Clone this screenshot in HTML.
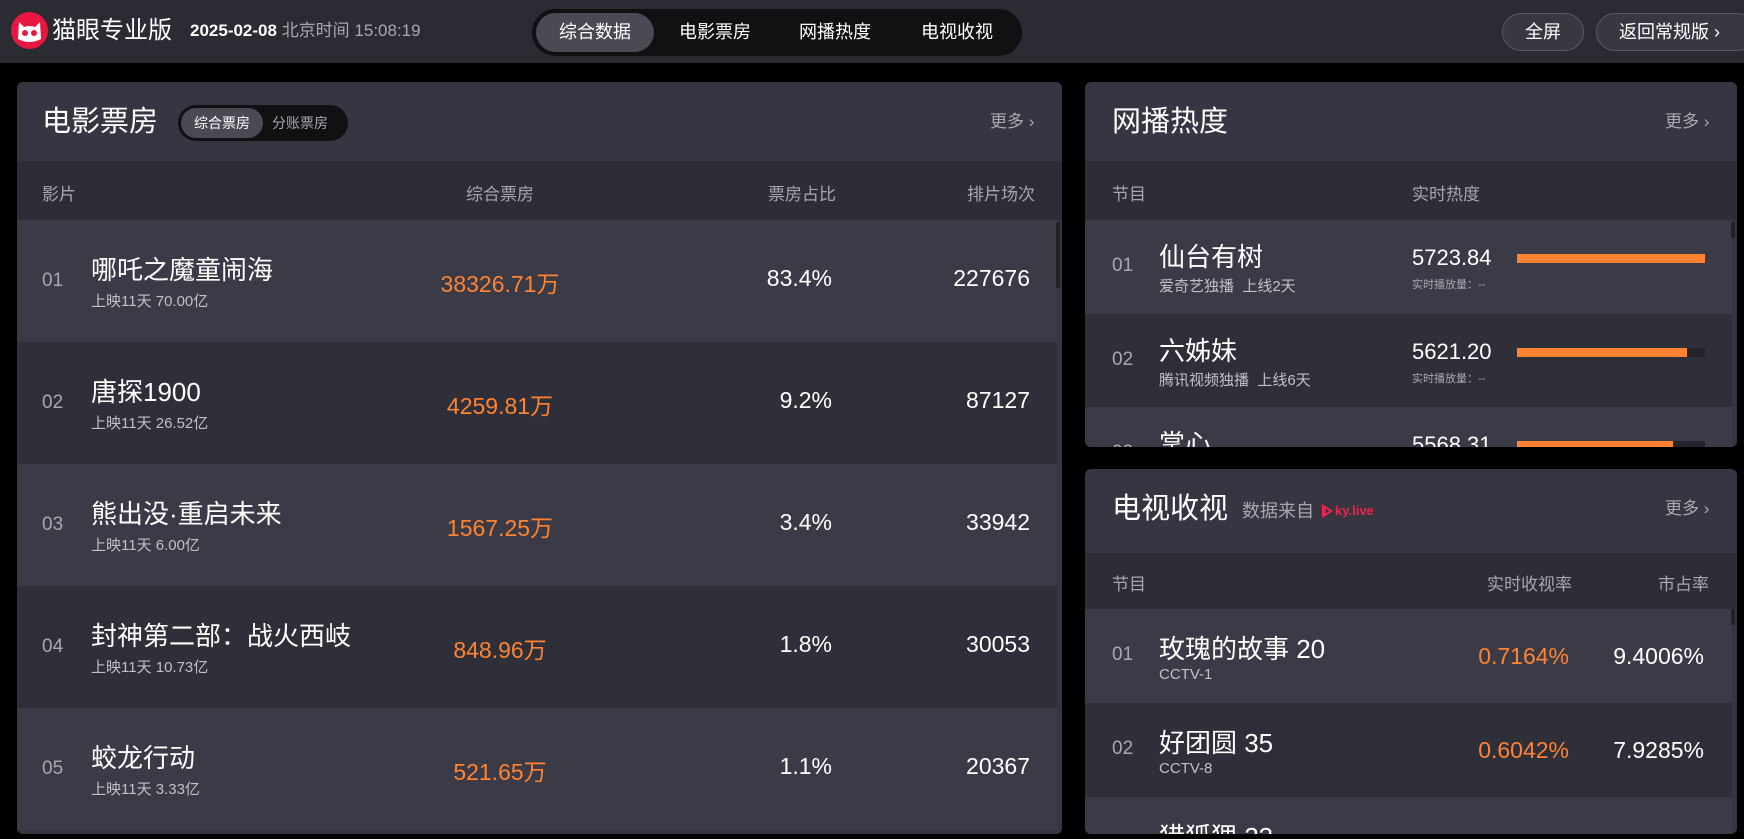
<!DOCTYPE html>
<html><head><meta charset="utf-8"><style>
*{margin:0;padding:0;box-sizing:border-box}
html,body{width:1744px;height:839px;overflow:hidden}
body{background:#000;font-family:"Liberation Sans","Noto Sans CJK SC",sans-serif;color:#fff;position:relative}
.a{position:absolute;white-space:nowrap}
.hdr{left:0;top:0;width:1744px;height:63px;background:#2b2b34}
.panel{background:#363642;border-radius:6px;overflow:hidden}
.th{background:#2d2d37;color:#a6a6ae;font-size:17px}
.r1{background:#3b3b47}.r2{background:#2f2f39}
.gray{color:#a8a8b0}.org{color:#ff8330}
.more{color:#a9a9b1;font-size:17px}
.btn{border:1px solid #5a5a64;background:#383842;border-radius:20px;height:38px;top:13px;font-size:18px;line-height:36px;text-align:center}
.bar{height:9px;background:#24242c}.bar i{display:block;height:9px;background:#ff8330}
</style></head><body>
<div class="a hdr"></div>
<svg class="a" style="left:11px;top:12px" width="37" height="37" viewBox="0 0 37 37"><circle cx="18.5" cy="18.5" r="18.5" fill="#e8173f"/><path d="M7 27 L8 10 L13 15 Q18.5 13 24 15 L29 10 L30 27 Q18.5 33 7 27Z" fill="#fff"/><circle cx="14" cy="21" r="3" fill="#e8173f"/><circle cx="23" cy="21" r="3" fill="#e8173f"/></svg>
<div class="a" style="left:52px;top:16px;font-size:24px;line-height:30px">猫眼专业版</div>
<div class="a" style="left:190px;top:20px;font-size:17px;line-height:22px;font-weight:bold">2025-02-08 <span style="color:#a8a8b0;font-weight:normal">北京时间 15:08:19</span></div>
<div class="a" style="left:532px;top:9px;width:490px;height:47px;background:#111114;border-radius:24px"></div>
<div class="a" style="left:536px;top:13px;width:118px;height:39px;background:#4a4a55;border-radius:20px"></div>
<div class="a" style="left:535px;top:20px;width:120px;text-align:center;font-size:18px;line-height:24px">综合数据</div>
<div class="a" style="left:655px;top:20px;width:120px;text-align:center;font-size:18px;line-height:24px">电影票房</div>
<div class="a" style="left:775px;top:20px;width:120px;text-align:center;font-size:18px;line-height:24px">网播热度</div>
<div class="a" style="left:897px;top:20px;width:120px;text-align:center;font-size:18px;line-height:24px">电视收视</div>
<div class="a btn" style="left:1502px;width:82px">全屏</div>
<div class="a btn" style="left:1596px;width:160px;text-align:left;padding-left:22px">返回常规版 ›</div>

<div class="a panel" style="left:17px;top:82px;width:1045px;height:752px">
<div class="a" style="left:25px;top:22px;font-size:29px;line-height:36px">电影票房</div>
<div class="a" style="left:161px;top:23px;width:170px;height:36px;background:#111114;border-radius:18px"></div>
<div class="a" style="left:164px;top:26px;width:82px;height:30px;background:#4a4a55;border-radius:15px;font-size:14px;line-height:30px;text-align:center">综合票房</div>
<div class="a gray" style="left:255px;top:26px;font-size:14px;line-height:30px">分账票房</div>
<div class="a more" style="left:973px;top:28px;line-height:24px">更多 ›</div>
<div class="a th" style="left:0;top:79px;width:1045px;height:59px"></div>
<div class="a th" style="left:25px;top:98px;background:none">影片</div>
<div class="a th" style="left:433px;top:98px;width:100px;text-align:center;background:none">综合票房</div>
<div class="a th" style="left:719px;top:98px;width:100px;text-align:right;background:none">票房占比</div>
<div class="a th" style="left:918px;top:98px;width:100px;text-align:right;background:none">排片场次</div>
<div class="a" style="left:0;top:138px;width:1040px">
<div style="position:relative;height:122px" class="r1"><div class="a gray" style="left:25px;top:50px;font-size:19px">01</div><div class="a" style="left:74px;top:30px;font-size:26px">哪吒之魔童闹海</div><div class="a" style="left:74px;top:70px;font-size:15px;color:#c0c0c6">上映11天 70.00亿</div><div class="a org" style="left:383px;top:45px;width:200px;text-align:center;font-size:23px">38326.71万</div><div class="a" style="left:615px;top:45px;width:200px;text-align:right;font-size:23px">83.4%</div><div class="a" style="left:813px;top:45px;width:200px;text-align:right;font-size:23px">227676</div></div>
<div style="position:relative;height:122px" class="r2"><div class="a gray" style="left:25px;top:50px;font-size:19px">02</div><div class="a" style="left:74px;top:30px;font-size:26px">唐探1900</div><div class="a" style="left:74px;top:70px;font-size:15px;color:#c0c0c6">上映11天 26.52亿</div><div class="a org" style="left:383px;top:45px;width:200px;text-align:center;font-size:23px">4259.81万</div><div class="a" style="left:615px;top:45px;width:200px;text-align:right;font-size:23px">9.2%</div><div class="a" style="left:813px;top:45px;width:200px;text-align:right;font-size:23px">87127</div></div>
<div style="position:relative;height:122px" class="r1"><div class="a gray" style="left:25px;top:50px;font-size:19px">03</div><div class="a" style="left:74px;top:30px;font-size:26px">熊出没·重启未来</div><div class="a" style="left:74px;top:70px;font-size:15px;color:#c0c0c6">上映11天 6.00亿</div><div class="a org" style="left:383px;top:45px;width:200px;text-align:center;font-size:23px">1567.25万</div><div class="a" style="left:615px;top:45px;width:200px;text-align:right;font-size:23px">3.4%</div><div class="a" style="left:813px;top:45px;width:200px;text-align:right;font-size:23px">33942</div></div>
<div style="position:relative;height:122px" class="r2"><div class="a gray" style="left:25px;top:50px;font-size:19px">04</div><div class="a" style="left:74px;top:30px;font-size:26px">封神第二部：战火西岐</div><div class="a" style="left:74px;top:70px;font-size:15px;color:#c0c0c6">上映11天 10.73亿</div><div class="a org" style="left:383px;top:45px;width:200px;text-align:center;font-size:23px">848.96万</div><div class="a" style="left:615px;top:45px;width:200px;text-align:right;font-size:23px">1.8%</div><div class="a" style="left:813px;top:45px;width:200px;text-align:right;font-size:23px">30053</div></div>
<div style="position:relative;height:122px" class="r1"><div class="a gray" style="left:25px;top:50px;font-size:19px">05</div><div class="a" style="left:74px;top:30px;font-size:26px">蛟龙行动</div><div class="a" style="left:74px;top:70px;font-size:15px;color:#c0c0c6">上映11天 3.33亿</div><div class="a org" style="left:383px;top:45px;width:200px;text-align:center;font-size:23px">521.65万</div><div class="a" style="left:615px;top:45px;width:200px;text-align:right;font-size:23px">1.1%</div><div class="a" style="left:813px;top:45px;width:200px;text-align:right;font-size:23px">20367</div></div>
</div>
<div class="a" style="left:1039px;top:140px;width:4px;height:66px;background:#222;border-radius:2px"></div>
</div>

<div class="a panel" style="left:1085px;top:82px;width:652px;height:365px">
<div class="a" style="left:27px;top:22px;font-size:29px;line-height:36px">网播热度</div>
<div class="a more" style="left:580px;top:28px;line-height:24px">更多 ›</div>
<div class="a th" style="left:0;top:79px;width:652px;height:59px"></div>
<div class="a th" style="left:27px;top:98px;background:none">节目</div>
<div class="a th" style="left:327px;top:98px;background:none">实时热度</div>
<div class="a" style="left:0;top:138px;width:647px">
<div style="position:relative;height:94px" class="r1"><div class="a gray" style="left:27px;top:35px;font-size:19px">01</div><div class="a" style="left:74px;top:17px;font-size:26px">仙台有树</div><div class="a" style="left:74px;top:55px;font-size:15px;color:#c0c0c6">爱奇艺独播&nbsp;&nbsp;上线2天</div><div class="a" style="left:327px;top:25px;font-size:22px">5723.84</div><div class="a" style="left:327px;top:56px;font-size:11px;color:#a8a8b0">实时播放量：--</div><div class="a bar" style="left:432px;top:34px;width:188px"><i style="width:188px"></i></div></div>
<div style="position:relative;height:93px" class="r2"><div class="a gray" style="left:27px;top:35px;font-size:19px">02</div><div class="a" style="left:74px;top:17px;font-size:26px">六姊妹</div><div class="a" style="left:74px;top:55px;font-size:15px;color:#c0c0c6">腾讯视频独播&nbsp;&nbsp;上线6天</div><div class="a" style="left:327px;top:25px;font-size:22px">5621.20</div><div class="a" style="left:327px;top:56px;font-size:11px;color:#a8a8b0">实时播放量：--</div><div class="a bar" style="left:432px;top:34px;width:188px"><i style="width:170px"></i></div></div>
<div style="position:relative;height:94px" class="r1"><div class="a gray" style="left:27px;top:35px;font-size:19px">03</div><div class="a" style="left:74px;top:17px;font-size:26px">掌心</div><div class="a" style="left:327px;top:25px;font-size:22px">5568.31</div><div class="a bar" style="left:432px;top:34px;width:188px"><i style="width:156px"></i></div></div>
</div>
<div class="a" style="left:646px;top:140px;width:4px;height:16px;background:#222;border-radius:2px"></div>
</div>

<div class="a panel" style="left:1085px;top:469px;width:652px;height:365px">
<div class="a" style="left:27px;top:22px;font-size:29px;line-height:36px">电视收视</div>
<div class="a gray" style="left:157px;top:30px;font-size:18px;line-height:24px">数据来自</div>
<svg class="a" style="left:236px;top:34px" width="13" height="16" viewBox="0 0 13 16"><path d="M1 1 L12 8 L1 15 Z M4.5 5.5 L4.5 10.5 L8.5 8Z" fill="#f0214a" fill-rule="evenodd"/></svg>
<div class="a" style="left:250px;top:32px;font-size:13px;line-height:20px;color:#f0214a;font-weight:bold">ky.live</div>
<div class="a more" style="left:580px;top:28px;line-height:24px">更多 ›</div>
<div class="a th" style="left:0;top:84px;width:652px;height:56px"></div>
<div class="a th" style="left:27px;top:101px;background:none">节目</div>
<div class="a th" style="left:387px;top:101px;width:100px;text-align:right;background:none">实时收视率</div>
<div class="a th" style="left:524px;top:101px;width:100px;text-align:right;background:none">市占率</div>
<div class="a" style="left:0;top:140px;width:647px">
<div style="position:relative;height:94px" class="r1"><div class="a gray" style="left:27px;top:35px;font-size:19px">01</div><div class="a" style="left:74px;top:20px;font-size:26px">玫瑰的故事 20</div><div class="a" style="left:74px;top:57px;font-size:15px;color:#c0c0c6">CCTV-1</div><div class="a org" style="left:284px;top:34px;width:200px;text-align:right;font-size:23px">0.7164%</div><div class="a" style="left:419px;top:34px;width:200px;text-align:right;font-size:23px">9.4006%</div></div>
<div style="position:relative;height:94px" class="r2"><div class="a gray" style="left:27px;top:35px;font-size:19px">02</div><div class="a" style="left:74px;top:20px;font-size:26px">好团圆 35</div><div class="a" style="left:74px;top:57px;font-size:15px;color:#c0c0c6">CCTV-8</div><div class="a org" style="left:284px;top:34px;width:200px;text-align:right;font-size:23px">0.6042%</div><div class="a" style="left:419px;top:34px;width:200px;text-align:right;font-size:23px">7.9285%</div></div>
<div style="position:relative;height:37px" class="r1"><div class="a" style="left:74px;top:20px;font-size:26px">猎狐狸 23</div></div>
</div>
<div class="a" style="left:646px;top:140px;width:4px;height:16px;background:#222;border-radius:2px"></div>
</div>
</body></html>
